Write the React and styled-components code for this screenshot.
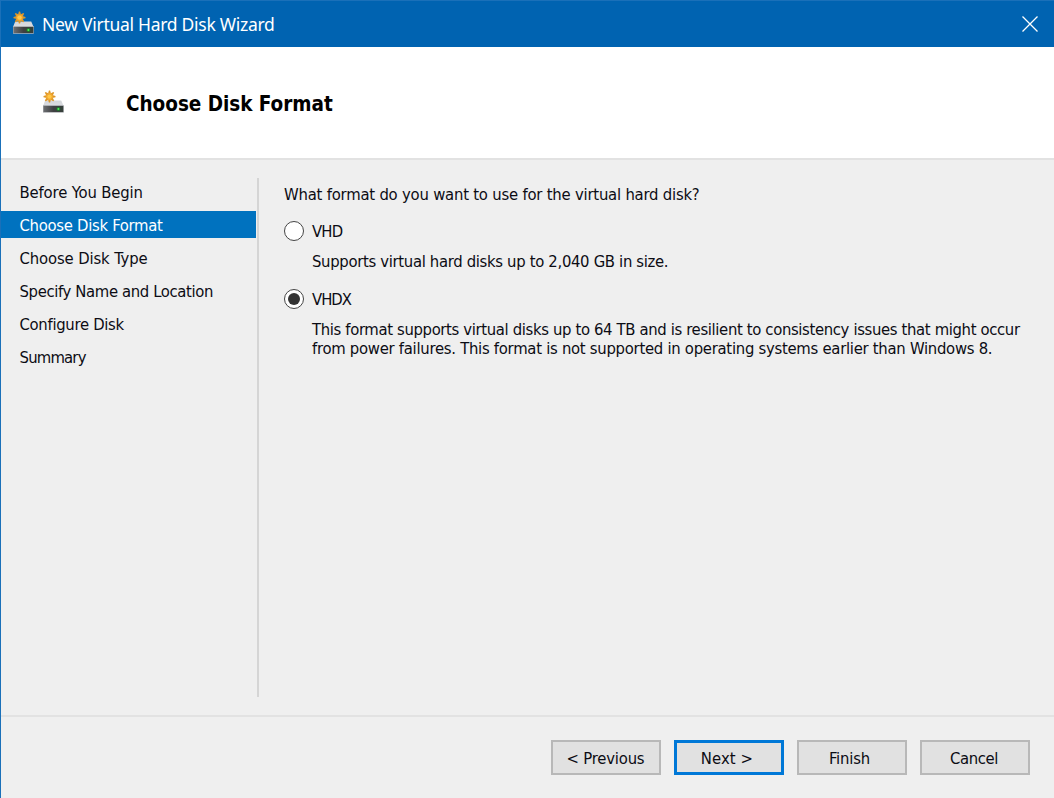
import React, { useState } from "react";
import styled, { createGlobalStyle } from "styled-components";

const GlobalStyle = createGlobalStyle`
  * { box-sizing: border-box; }
  body { margin: 0; background: #efefef; }
`;

const Window = styled.div`
  width: 1054px;
  height: 798px;
  display: flex;
  flex-direction: column;
  overflow: hidden;
  background: #efefef;
  border-left: 1px solid #1a70b9;
  color: #0c0c14;
  font-family: "DejaVu Sans Condensed", "DejaVu Sans", sans-serif;
  font-stretch: condensed;
  font-size: 16.5px;
  line-height: 20px;
  white-space: nowrap;
`;

const TitleBar = styled.header`
  height: 47px;
  flex: none;
  display: flex;
  align-items: center;
  padding: 0 16px 0 11px;
  background: #0063b1;
  border-top: 1px solid #1a70b9;
`;

const IconSlot = styled.span`
  display: flex;
  margin-bottom: 2px;
`;

const Title = styled.span`
  flex: 1;
  margin-left: 8px;
  color: #fff;
  font: 400 17.5px/24px "Noto Sans", sans-serif;
  letter-spacing: ${(p) => p.$track}px;
`;

const CloseButton = styled.button`
  display: flex;
  padding: 0;
  margin-bottom: 1px;
  border: 0;
  background: none;
`;

const Banner = styled.section`
  height: 113px;
  flex: none;
  display: flex;
  align-items: center;
  padding: 0 42px 0 41px;
  background: #fff;
  border-bottom: 2px solid #e2e2e2;
`;

const Heading = styled.h1`
  margin: 0 0 0 62px;
  padding-top: 3px;
  color: #000;
  font-size: 20.5px;
  line-height: 26px;
  font-weight: 700;
  letter-spacing: ${(p) => p.$track}px;
`;

const Body = styled.div`
  height: 557px;
  flex: none;
  display: flex;
  padding: 18px 0;
  border-bottom: 2px solid #e2e2e2;
`;

const Steps = styled.nav`
  width: 258px;
  flex: none;
  display: flex;
  flex-direction: column;
  gap: 6px;
  padding-right: 1px;
  border-right: 2px solid #d5d5d5;
`;

const Step = styled.a`
  height: 27px;
  padding: 4px 0 0 18.5px;
  line-height: 21px;
  letter-spacing: ${(p) => p.$track}px;
  color: ${(p) => (p.$current ? "#fff" : "inherit")};
  background: ${(p) => (p.$current ? "#0072bf" : "transparent")};
`;

const Content = styled.main`
  flex: 1;
  min-width: 0;
  padding: 7px 0 0 25px;
`;

const Line = styled.p`
  margin: 0;
  letter-spacing: ${(p) => p.$track}px;
`;

const Option = styled.label`
  display: grid;
  grid-template-columns: 28px 1fr;
  align-items: start;
  margin-top: ${(p) => p.$gap}px;
`;

const OptionName = styled(Line)`
  padding-top: 1px;
`;

const Radio = styled.span`
  width: 20px;
  height: 20px;
  display: grid;
  place-items: center;
  border: 1.5px solid #454545;
  border-radius: 50%;
  background: #fff;
`;

const Dot = styled.span`
  width: 12px;
  height: 12px;
  border-radius: 50%;
  background: #333;
`;

const Description = styled.div`
  margin: 10px 0 0 28px;

  ${Line} + ${Line} {
    margin-top: -1px;
  }
`;

const Footer = styled.footer`
  flex: 1;
  display: flex;
  justify-content: flex-end;
  align-items: flex-start;
  gap: 13px;
  padding: 23px 24px 0 0;
`;

const Button = styled.button`
  width: 110px;
  height: 35px;
  padding: 2px ${(p) => p.$inset}px 0 0;
  font: inherit;
  color: inherit;
  letter-spacing: ${(p) => p.$track}px;
  background: #e1e1e1;
  border: ${(p) => (p.$primary ? "3px solid #0078d7" : "2px solid #b8b8b8")};
`;

const RAYS = [0, 45, 90, 135, 180, 225, 270, 315];

function DiskIcon({ id }) {
  return (
    <svg width="22" height="22" viewBox="0 0 22 22" overflow="visible">
      <defs>
        <linearGradient id={`${id}-top`} x1="0" y1="0" x2="0" y2="1">
          <stop offset="0" stopColor="#d3d6da" />
          <stop offset="1" stopColor="#dcdee2" />
        </linearGradient>
        <linearGradient id={`${id}-front`} x1="0" y1="0" x2="1" y2="0">
          <stop offset="0" stopColor="#6c6e71" />
          <stop offset="0.5" stopColor="#3e4042" />
          <stop offset="1" stopColor="#35403a" />
        </linearGradient>
      </defs>
      <path d="M3.2 9.6h16L21.6 15H1z" fill={`url(#${id}-top)`} />
      <rect x="1" y="14" width="20.8" height="7.8" rx="0.6" fill="#aeb0b4" />
      <rect x="1.5" y="15" width="19.8" height="6" fill={`url(#${id}-front)`} />
      <circle cx="16.4" cy="17.9" r="2" fill="#168a25" opacity="0.75" />
      <circle cx="16.4" cy="17.9" r="1" fill="#4df05a" />
      {RAYS.map((a) => (
        <path key={a} d="M6 2.8L6.9 -0.4H8.1L9 2.8z" fill="#dc972a" transform={`rotate(${a} 7.5 5.6)`} />
      ))}
      <circle cx="7.5" cy="5.6" r="3.4" fill="#f2a52a" />
      <circle cx="7.5" cy="5.6" r="2.2" fill="#ffc848" />
    </svg>
  );
}

const STEPS = [
  { label: "Before You Begin", track: -0.14 },
  { label: "Choose Disk Format", track: -0.29 },
  { label: "Choose Disk Type", track: -0.12 },
  { label: "Specify Name and Location", track: -0.36 },
  { label: "Configure Disk", track: -0.3 },
  { label: "Summary", track: -0.8 },
];

const FORMATS = [
  {
    name: "VHD",
    gap: 16,
    track: -0.8,
    lines: [{ text: "Supports virtual hard disks up to 2,040 GB in size.", track: -0.32 }],
  },
  {
    name: "VHDX",
    gap: 17,
    track: -1,
    lines: [
      { text: "This format supports virtual disks up to 64 TB and is resilient to consistency issues that might occur", track: -0.35 },
      { text: "from power failures. This format is not supported in operating systems earlier than Windows 8.", track: -0.27 },
    ],
  },
];

const BUTTONS = [
  { label: "< Previous", track: -0.2, inset: 1 },
  { label: "Next >", track: 0.1, inset: 4, primary: true },
  { label: "Finish", track: -0.15, inset: 5 },
  { label: "Cancel", track: -0.35, inset: 2 },
];

export default function App() {
  const [format, setFormat] = useState("VHDX");
  return (
    <Window>
      <GlobalStyle />
      <TitleBar>
        <IconSlot>
          <DiskIcon id="title" />
        </IconSlot>
        <Title $track={-0.28}>New Virtual Hard Disk Wizard</Title>
        <CloseButton aria-label="Close">
          <svg width="16" height="16" viewBox="0 0 16 16" stroke="#fff" strokeWidth="1.3">
            <path d="M0.5 0.5l15 15M15.5 0.5l-15 15" />
          </svg>
        </CloseButton>
      </TitleBar>
      <Banner>
        <IconSlot>
          <DiskIcon id="banner" />
        </IconSlot>
        <Heading $track={-0.03}>Choose Disk Format</Heading>
      </Banner>
      <Body>
        <Steps>
          {STEPS.map((s) => (
            <Step key={s.label} $track={s.track} $current={s.label === "Choose Disk Format"}>
              {s.label}
            </Step>
          ))}
        </Steps>
        <Content>
          <Line $track={-0.21}>What format do you want to use for the virtual hard disk?</Line>
          {FORMATS.map((f) => (
            <React.Fragment key={f.name}>
              <Option $gap={f.gap} onClick={() => setFormat(f.name)}>
                <Radio>{format === f.name && <Dot />}</Radio>
                <OptionName $track={f.track}>{f.name}</OptionName>
              </Option>
              <Description>
                {f.lines.map((l) => (
                  <Line key={l.text} $track={l.track}>{l.text}</Line>
                ))}
              </Description>
            </React.Fragment>
          ))}
        </Content>
      </Body>
      <Footer>
        {BUTTONS.map((b) => (
          <Button key={b.label} $track={b.track} $inset={b.inset} $primary={b.primary}>{b.label}</Button>
        ))}
      </Footer>
    </Window>
  );
}
